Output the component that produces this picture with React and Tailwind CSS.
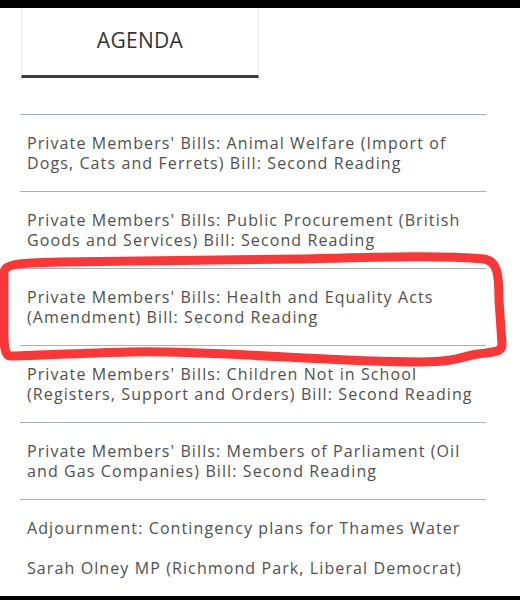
import React from 'react';

const items = [
  "Private Members' Bills: Animal Welfare (Import of Dogs, Cats and Ferrets) Bill: Second Reading",
  "Private Members' Bills: Public Procurement (British Goods and Services) Bill: Second Reading",
  "Private Members' Bills: Health and Equality Acts (Amendment) Bill: Second Reading",
  "Private Members' Bills: Children Not in School (Registers, Support and Orders) Bill: Second Reading",
  "Private Members' Bills: Members of Parliament (Oil and Gas Companies) Bill: Second Reading",
];

export default function App() {
  return (
    <div className="relative h-[600px] w-[520px] overflow-hidden bg-white flex flex-col font-['Open_Sans',sans-serif]">
      <div className="h-[8px] bg-black shrink-0" />

      <main className="flex-1 overflow-hidden">
        {/* Tab */}
        <div className="ml-[21px] w-[238px] h-[70px] border-x border-[#e6e6e6] border-b-[3px] border-b-[#3d3d3d] flex items-center justify-center">
          <span className="text-[21px] text-[#333] tracking-[0.3px] -mt-[2px]">AGENDA</span>
        </div>

        {/* Agenda list */}
        <ul className="mt-[36px] ml-[20px] w-[466px] text-[16px] leading-[20px] tracking-[1.1px] text-[#505050]">
          {items.map((t) => (
            <li key={t} className="border-t border-[#aab1bb] px-[7px] py-[18px]">
              {t}
            </li>
          ))}
          <li className="border-t border-[#aab1bb] px-[7px] pt-[18px] flex flex-col gap-[20px]">
            <p>Adjournment: Contingency plans for Thames Water</p>
            <p>Sarah Olney MP (Richmond Park, Liberal Democrat)</p>
          </li>
        </ul>
      </main>

      <div className="h-[4px] bg-black shrink-0" />

      {/* hand-drawn red annotation */}
      <svg className="absolute inset-0 pointer-events-none" width="520" height="600" viewBox="0 0 520 600">
        <path
          d="M4 274 C3 264 16 263 60 262 L300 259 C380 257 440 255 484 259 C498 261 499 276 499 300 L502 344 C503 352 494 352 478 354 C462 356 458 362 420 362 C330 362 210 350 130 352 C80 353 30 356 11 356 C3 356 4 340 4 320 L4 274 Z"
          fill="none"
          stroke="#fa3636"
          strokeWidth="9"
          strokeLinejoin="round"
          strokeLinecap="round"
        />
      </svg>
    </div>
  );
}
